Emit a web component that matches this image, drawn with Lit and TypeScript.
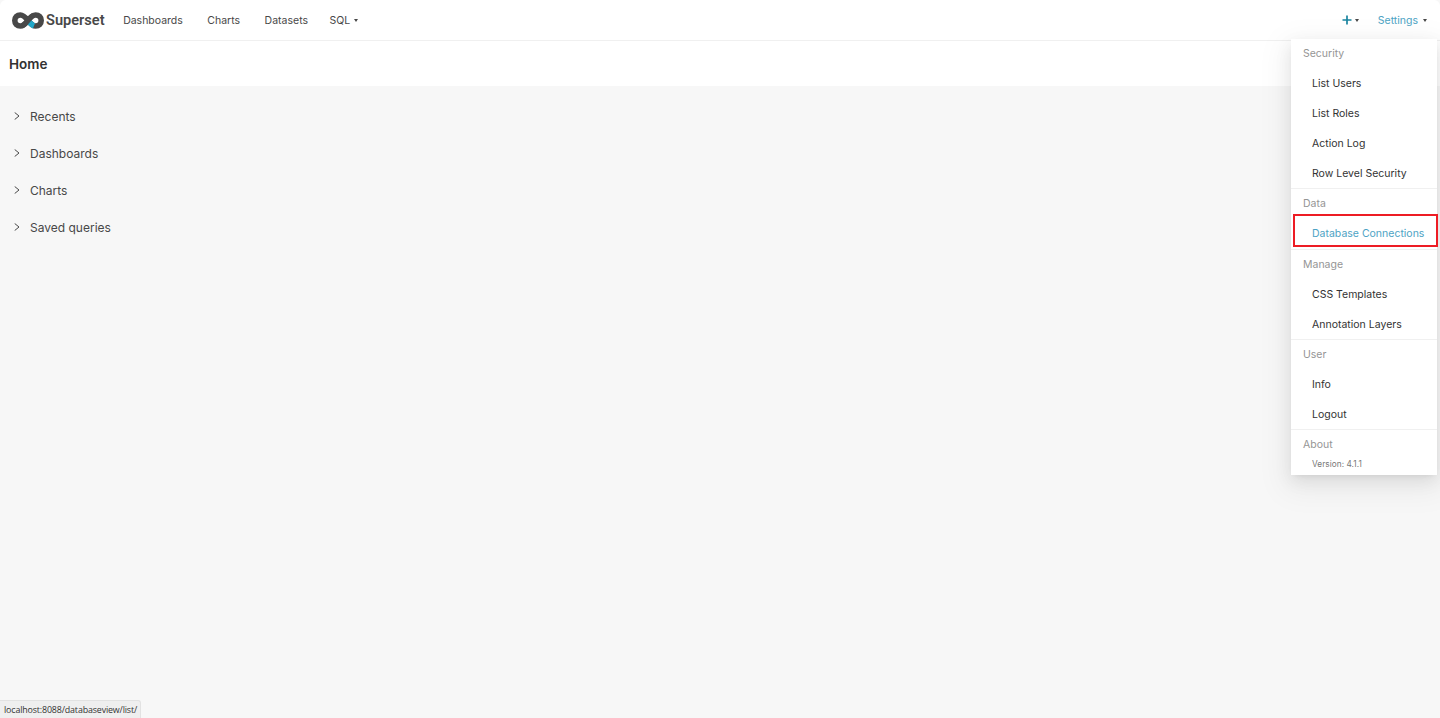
import { LitElement, html, css, svg } from 'lit';
import { customElement } from 'lit/decorators.js';

const NAV_LINKS = ['Dashboards', 'Charts', 'Datasets'];
const SECTIONS = ['Recents', 'Dashboards', 'Charts', 'Saved queries'];
const MENU = [
  { title: 'Security', items: ['List Users', 'List Roles', 'Action Log', 'Row Level Security'] },
  { title: 'Data', items: ['Database Connections'] },
  { title: 'Manage', items: ['CSS Templates', 'Annotation Layers'] },
  { title: 'User', items: ['Info', 'Logout'] },
];

const logo = svg`
  <svg class="logo" width="32" height="17" viewBox="0 0 32 17" fill="none">
    <path d="M16 8.5 C13.4 5.2 11.6 3 8.4 3 C5 3 2.8 5.4 2.8 8.5 C2.8 11.6 5 14 8.4 14 C11.6 14 13.4 11.8 16 8.5 C18.6 5.2 20.4 3 23.6 3 C27 3 29.2 5.4 29.2 8.5 C29.2 11.6 27 14 23.6 14 C20.4 14 18.6 11.8 16 8.5 Z" stroke="#484848" stroke-width="5.6"/>
    <path d="M15 7.2 C17 9.8 19 12.6 22 13.8" stroke="#20a7c9" stroke-width="5.6"/>
    <path d="M10.5 13.8 C13 12.8 14.6 10.3 16 8.5 C17.4 6.7 18.8 4.4 21.5 3.2" stroke="#484848" stroke-width="5.2"/>
  </svg>`;

@customElement('app-root')
export class AppRoot extends LitElement {
  static styles = css`
    :host {
      display: block;
      position: relative;
      height: 718px;
      overflow: hidden;
      background: #f7f7f7;
      font-family: Inter, 'Noto Sans', sans-serif;
      color: #323232;
    }
    .navbar {
      display: flex;
      align-items: center;
      height: 40px;
      padding: 0 13px 0 12px;
      background: #fff;
      border-bottom: 1px solid #f0f0f0;
      border-radius: 6px 6px 0 0;
      font-size: 10.5px;
    }
    .brand {
      display: flex;
      align-items: center;
      gap: 2px;
      margin-right: 18.5px;
      font-size: 14.6px;
      font-weight: 600;
      color: #484848;
      font-family: Roboto, sans-serif;
    }
    .logo {
      display: block;
    }
    .links {
      display: flex;
      align-items: center;
      gap: 24.5px;
      color: #484848;
    }
    .sql {
      display: flex;
      align-items: center;
      gap: 4px;
      margin-left: -3px;
    }
    .caret {
      width: 0;
      height: 0;
      border-left: 2.5px solid transparent;
      border-right: 2.5px solid transparent;
      border-top: 3px solid #484848;
    }
    .right {
      display: flex;
      align-items: center;
      margin-left: auto;
    }
    .plus {
      display: flex;
      align-items: center;
      gap: 3px;
      margin-right: 19px;
    }
    .settings {
      display: flex;
      align-items: center;
      gap: 5px;
      color: #4da3c4;
    }
    .title {
      height: 45px;
      display: flex;
      align-items: center;
      padding-left: 9px;
      background: #fff;
      font-size: 13.5px;
      font-weight: 600;
      color: #323232;
    }
    .sections {
      padding-top: 11.5px;
    }
    .section {
      display: flex;
      align-items: center;
      height: 37px;
      padding-left: 14px;
      gap: 10px;
      font-size: 12px;
      color: #484848;
    }
    .section svg {
      display: block;
      margin-top: -1px;
    }
    .menu {
      position: absolute;
      left: 1291px;
      top: 39px;
      width: 146px;
      height: 436px;
      background: #fff;
      box-shadow: 0 3px 6px -4px rgba(0, 0, 0, 0.12), 0 6px 16px 0 rgba(0, 0, 0, 0.08), 0 9px 28px 8px rgba(0, 0, 0, 0.05);
      font-size: 10.5px;
    }
    .group {
      padding-bottom: 0.3px;
      box-shadow: inset 0 -1px 0 #f0f0f0;
    }
    .group-title {
      height: 30px;
      line-height: 29px;
      padding-left: 12px;
      color: #959595;
    }
    .item {
      height: 30px;
      line-height: 29px;
      padding-left: 21px;
      color: #323232;
      white-space: nowrap;
    }
    .item.active {
      color: #4da3c4;
    }
    .version {
      padding-left: 21px;
      font-size: 8.25px;
      line-height: 8px;
      letter-spacing: 0.05px;
      color: #777;
    }
    .highlight {
      position: absolute;
      left: 1293px;
      top: 214px;
      width: 141px;
      height: 29px;
      border: 2px solid #ed1c24;
      pointer-events: none;
    }
    .status {
      position: absolute;
      left: 0;
      bottom: 0;
      height: 17px;
      line-height: 17px;
      padding: 0 3px 0 4px;
      background: #efefef;
      border-top: 1px solid #e2e2e2;
      border-right: 1px solid #e2e2e2;
      border-top-right-radius: 3px;
      font-family: 'Open Sans', sans-serif;
      font-size: 8.9px;
      letter-spacing: -0.15px;
      color: #333;
    }
  `;

  render() {
    return html`
      <nav class="navbar">
        <div class="brand">${logo}<span>Superset</span></div>
        <div class="links">
          ${NAV_LINKS.map((l) => html`<span>${l}</span>`)}
          <span class="sql">SQL <i class="caret"></i></span>
        </div>
        <div class="right">
          <span class="plus">
            <svg width="10" height="10" viewBox="0 0 10 10"><path d="M5 .5v9M.5 5h9" stroke="#1a85a0" stroke-width="1.7"/></svg>
            <i class="caret"></i>
          </span>
          <span class="settings">Settings <i class="caret"></i></span>
        </div>
      </nav>
      <header class="title">Home</header>
      <main class="sections">
        ${SECTIONS.map(
          (s) => html`<div class="section">
            <svg width="6" height="8" viewBox="0 0 6 8" fill="none"><path d="M.7.5 5 4 .7 7.5" stroke="#484848" stroke-width="1"/></svg>
            <span>${s}</span>
          </div>`,
        )}
      </main>
      <div class="menu">
        ${MENU.map(
          (g) => html`<div class="group">
            <div class="group-title">${g.title}</div>
            ${g.items.map(
              (i) => html`<div class="item ${i === 'Database Connections' ? 'active' : ''}">${i}</div>`,
            )}
          </div>`,
        )}
        <div class="group-title">About</div>
        <div class="version">Version: 4.1.1</div>
      </div>
      <div class="highlight"></div>
      <div class="status">localhost:8088/databaseview/list/</div>
    `;
  }
}
